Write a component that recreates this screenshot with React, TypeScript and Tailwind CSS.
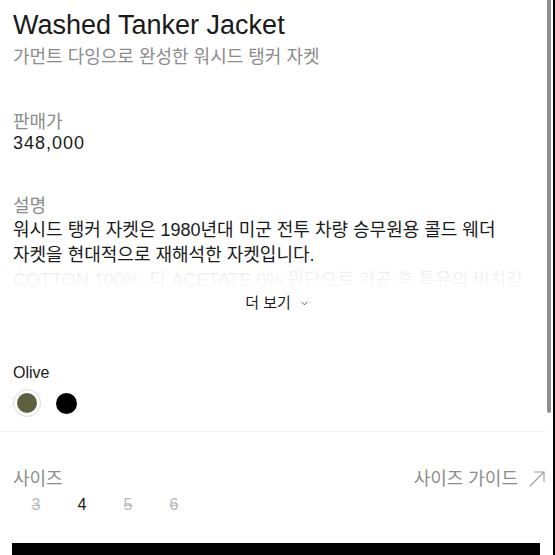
import { ChevronDown } from 'lucide-react';

const sizes = [
    { label: '3', soldOut: true },
    { label: '4', soldOut: false },
    { label: '5', soldOut: true },
    { label: '6', soldOut: true },
];

const ProductDetail = () => {
    return (
        <div className="w-[555px] h-[555px] overflow-hidden bg-white flex font-['Liberation_Sans','Noto_Sans_CJK_KR',sans-serif]">
            <div className="flex-1 flex flex-col">
                <div className="px-[13px]">
                    <h1 className="pt-[10px] text-[27px] leading-[30px] text-[#1a1a1a]">Washed Tanker Jacket</h1>
                    <p className="mt-[5px] text-[18px] leading-[24px] text-[#8c8c8c]">가먼트 다잉으로 완성한 워시드 탱커 자켓</p>

                    <p className="mt-[41px] text-[18px] leading-[24px] text-[#8c8c8c]">판매가</p>
                    <p className="text-[18px] leading-[19px] tracking-[1px] text-[#1a1a1a]">348,000</p>

                    <p className="mt-[42px] text-[18px] leading-[23px] text-[#8c8c8c]">설명</p>
                    <div className="relative h-[75px] overflow-hidden">
                        <p className="text-[18px] leading-[25px] text-[#1a1a1a]">
                            워시드 탱커 자켓은 1980년대 미군 전투 차량 승무원용 콜드 웨더
                            <br />
                            자켓을 현대적으로 재해석한 자켓입니다.
                            <br />
                            <span className="whitespace-nowrap">COTTON 100%, 다 ACETATE 0% 원단으로 가공 후 특유의 비치감</span>
                        </p>
                        <div className="absolute left-0 right-0 bottom-0 h-[27px] bg-gradient-to-b from-white/90 to-white"></div>
                    </div>
                    <div className="pl-[9px] flex items-center justify-center gap-[8px] h-[20px] text-[15px] text-[#1a1a1a]">
                        <span>더 보기</span>
                        <ChevronDown size={11} strokeWidth={1.5} />
                    </div>

                    <p className="mt-[50px] text-[16px] leading-[20px] text-[#1a1a1a]">Olive</p>
                    <div className="mt-[6px] flex items-center gap-[15px]">
                        <div className="w-[28px] h-[28px] rounded-full border border-[#dcdcd4] flex items-center justify-center">
                            <div className="w-[20px] h-[20px] rounded-full bg-[#5e6140]"></div>
                        </div>
                        <div className="w-[21px] h-[21px] rounded-full bg-black"></div>
                    </div>
                </div>

                <div className="mt-[14px] h-px bg-[#f0f0f0]"></div>

                <div className="pl-[13px] pr-[1px]">
                    <div className="mt-[36px] flex items-center justify-between h-[24px] text-[18px] text-[#8c8c8c]">
                        <span>사이즈</span>
                        <span className="flex items-center gap-[11px]">
                            사이즈 가이드
                            <svg width="16" height="16" viewBox="0 0 16 16" fill="none" stroke="#9a9a9a" strokeWidth="1.1" strokeLinecap="round" strokeLinejoin="round">
                                <path d="M1 15L15 1" />
                                <path d="M5.5 1H15V10.5" />
                            </svg>
                        </span>
                    </div>
                    <div className="mt-[4px] flex">
                        {sizes.map((s) => (
                            <span
                                key={s.label}
                                className={
                                    s.soldOut
                                        ? 'w-[46px] text-center text-[16px] leading-[20px] text-[#b8b8b8] line-through'
                                        : 'w-[46px] text-center text-[16px] leading-[20px] text-[#1a1a1a]'
                                }
                            >
                                {s.label}
                            </span>
                        ))}
                    </div>
                </div>
                <div className="mt-[28px] ml-[12px] mr-[6px] h-[56px] bg-black"></div>
            </div>

            <div className="w-[9px] flex">
                <div className="w-[4px] ml-[1px] h-[413px] rounded-b-full bg-[#8f8f8f]"></div>
                <div className="w-[2px] ml-[2px] h-full bg-black"></div>
            </div>
        </div>
    );
};

export default function App() {
    return <ProductDetail />;
}
